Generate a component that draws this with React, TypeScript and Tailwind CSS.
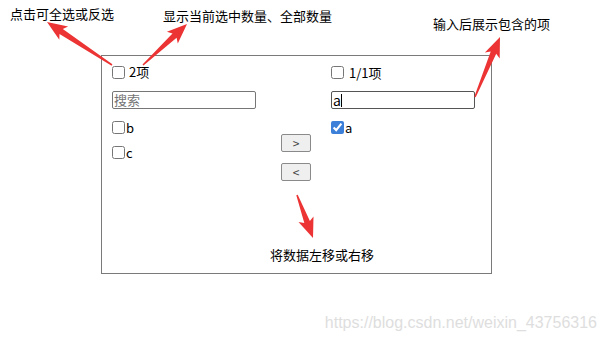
import React from 'react'

const arrowPoints = (tx: number, ty: number, px: number, py: number): string => {
  const dx = px - tx
  const dy = py - ty
  const len = Math.hypot(dx, dy)
  const ux = dx / len
  const uy = dy / len
  const nx = -uy
  const ny = ux
  const h = 17
  const hw = 8
  const sw = 3
  const tw = 0.8
  const bx = px - ux * h
  const by = py - uy * h
  const pts = [
    [tx + nx * tw, ty + ny * tw],
    [bx + nx * sw, by + ny * sw],
    [bx - ux * 3 + nx * hw, by - uy * 3 + ny * hw],
    [px, py],
    [bx - ux * 3 - nx * hw, by - uy * 3 - ny * hw],
    [bx - nx * sw, by - ny * sw],
    [tx - nx * tw, ty - ny * tw],
  ]
  return pts.map((p) => `${p[0].toFixed(1)},${p[1].toFixed(1)}`).join(' ')
}

const arrows: [number, number, number, number][] = [
  [112, 65, 47, 22],
  [143, 65, 187, 24],
  [475, 97, 500, 37],
  [297, 195, 313, 238],
]

const Item = ({ label, checked }: { label: string; checked?: boolean }) => (
  <label className="flex items-center h-[13px] text-[13px] leading-[13px]">
    <input
      type="checkbox"
      defaultChecked={checked}
      className="m-0 w-[13px] h-[13px] accent-[#3b7fd9]"
    />
    <span className="ml-[1px]">{label}</span>
  </label>
)

const App = (): JSX.Element => {
  return (
    <div className="relative w-[605px] h-[341px] bg-white overflow-hidden text-black font-['Noto_Sans_CJK_SC',sans-serif]">
      {/* transfer box */}
      <div className="ml-[101px] pt-[55px]">
        <div className="flex w-[391px] h-[219px] border border-[#7a7a7a]">
          <div className="ml-[10px] w-[145px] pt-[9px] flex flex-col">
            <label className="flex items-center h-[14px] text-[13px] leading-[14px]">
              <input type="checkbox" className="m-0 w-[13px] h-[13px]" />
              <span className="ml-[4px]">2项</span>
            </label>
            <input
              placeholder="搜索"
              className="block mt-[12px] h-[18px] w-[144px] border border-[#767676] rounded-[2px] px-[1px] text-[13px] placeholder:text-[#757575] outline-none"
            />
            <div className="mt-[12px]">
              <Item label="b" />
            </div>
            <div className="mt-[12px]">
              <Item label="c" />
            </div>
          </div>

          <div className="ml-[24px] w-[30px] pt-[78px] flex flex-col gap-[11px]">
            <button className="h-[18px] w-[30px] bg-[#efefef] border border-[#8a8a8a] rounded-[2px] text-[12px] leading-[16px] text-[#444]">
              &gt;
            </button>
            <button className="h-[18px] w-[30px] bg-[#efefef] border border-[#8a8a8a] rounded-[2px] text-[12px] leading-[16px] text-[#444]">
              &lt;
            </button>
          </div>

          <div className="ml-[20px] w-[144px] pt-[10px] flex flex-col">
            <label className="flex items-center h-[13px] text-[13px] leading-[13px]">
              <input type="checkbox" className="m-0 w-[13px] h-[13px]" />
              <span className="ml-[5px]">1/1项</span>
            </label>
            <div className="relative mt-[12px] h-[18px]">
              <input
                value="a"
                readOnly
                className="block h-[18px] w-[144px] border border-[#555] rounded-[2px] px-[1px] text-[14px] leading-[16px] outline-none"
              />
              <span className="absolute left-[10px] top-[3px] w-[1px] h-[13px] bg-black" />
            </div>
            <div className="mt-[12px]">
              <Item label="a" checked />
            </div>
          </div>
        </div>
      </div>

      {/* callout notes */}
      <div className="absolute left-[10px] top-[7px] text-[13px] leading-[13px]">点击可全选或反选</div>
      <div className="absolute left-[163px] top-[9px] text-[13px] leading-[13px]">显示当前选中数量、全部数量</div>
      <div className="absolute left-[433px] top-[17px] text-[13px] leading-[13px]">输入后展示包含的项</div>
      <div className="absolute left-[270px] top-[248px] text-[13px] leading-[13px]">将数据左移或右移</div>

      <svg className="absolute inset-0 pointer-events-none" width="605" height="341" viewBox="0 0 605 341">
        {arrows.map((a, i) => (
          <polygon key={i} points={arrowPoints(a[0], a[1], a[2], a[3])} fill="#ec3434" />
        ))}
      </svg>

      <div className="absolute right-[8px] top-[314px] text-[16px] leading-[18px] text-[#dedede] font-['Liberation_Sans',sans-serif]">
        https://blog.csdn.net/weixin_43756316
      </div>
    </div>
  )
}

export default App
